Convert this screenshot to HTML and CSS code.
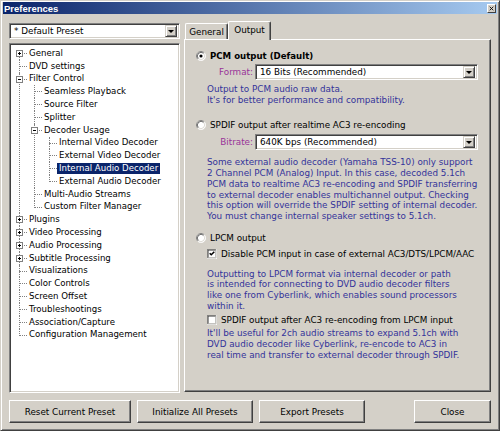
FILE: index.html
```html
<!DOCTYPE html>
<html>
<head>
<meta charset="utf-8">
<title>Preferences</title>
<link rel="stylesheet" href="styles.css">
</head>
<body>
<div class="window">
  <div class="titlebar">
    <span class="title">Preferences</span>
    <span class="xbtn"><svg width="7" height="7" viewBox="0 0 7 7"><path d="M1 1L6 6M6 1L1 6" stroke="#000" stroke-width="1.2"/></svg></span>
  </div>
  <div class="main">
    <div class="left">
      <div class="combo">
        <span class="val">* Default Preset</span>
        <span class="drop"><span class="tri"></span></span>
      </div>
      <div class="tree">
        <ul class="root">
          <li class="has"><span class="exp plus"></span><div class="row"><span class="lbl">General</span></div></li>
          <li><div class="row"><span class="lbl">DVD settings</span></div></li>
          <li class="has"><span class="exp minus"></span><div class="row"><span class="lbl">Filter Control</span></div>
            <ul>
              <li><div class="row"><span class="lbl">Seamless Playback</span></div></li>
              <li><div class="row"><span class="lbl">Source Filter</span></div></li>
              <li><div class="row"><span class="lbl">Splitter</span></div></li>
              <li class="has"><span class="exp minus"></span><div class="row"><span class="lbl">Decoder Usage</span></div>
                <ul>
                  <li><div class="row"><span class="lbl">Internal Video Decoder</span></div></li>
                  <li><div class="row"><span class="lbl">External Video Decoder</span></div></li>
                  <li><div class="row"><span class="lbl sel">Internal Audio Decoder</span></div></li>
                  <li><div class="row"><span class="lbl">External Audio Decoder</span></div></li>
                </ul>
              </li>
              <li><div class="row"><span class="lbl">Multi-Audio Streams</span></div></li>
              <li><div class="row"><span class="lbl">Custom Filter Manager</span></div></li>
            </ul>
          </li>
          <li class="has"><span class="exp plus"></span><div class="row"><span class="lbl">Plugins</span></div></li>
          <li class="has"><span class="exp plus"></span><div class="row"><span class="lbl">Video Processing</span></div></li>
          <li class="has"><span class="exp plus"></span><div class="row"><span class="lbl">Audio Processing</span></div></li>
          <li class="has"><span class="exp plus"></span><div class="row"><span class="lbl">Subtitle Processing</span></div></li>
          <li><div class="row"><span class="lbl">Visualizations</span></div></li>
          <li><div class="row"><span class="lbl">Color Controls</span></div></li>
          <li><div class="row"><span class="lbl">Screen Offset</span></div></li>
          <li><div class="row"><span class="lbl">Troubleshootings</span></div></li>
          <li><div class="row"><span class="lbl">Association/Capture</span></div></li>
          <li><div class="row"><span class="lbl">Configuration Management</span></div></li>
        </ul>
      </div>
    </div>
    <div class="right">
      <div class="tabs">
        <div class="tab">General</div>
        <div class="tab active">Output</div>
      </div>
      <div class="panel">
        <div class="opt first">
          <svg class="radio" width="10" height="10" viewBox="0 0 12 12"><circle cx="6" cy="6" r="5.5" fill="#fff"/><path d="M9.89 2.11A5.5 5.5 0 0 0 2.11 9.89" stroke="#808080" fill="none"/><path d="M2.11 9.89A5.5 5.5 0 0 0 9.89 2.11" stroke="#fff" fill="none"/><path d="M9.18 2.82A4.5 4.5 0 0 0 2.82 9.18" stroke="#404040" fill="none"/><path d="M2.82 9.18A4.5 4.5 0 0 0 9.18 2.82" stroke="#d4d0c8" fill="none"/><circle cx="6" cy="6" r="1.9" fill="#000"/></svg>
          <span class="bold">PCM output (Default)</span>
        </div>
        <div class="field f1">
          <span class="flabel">Format:</span>
          <div class="combo wide"><span class="val">16 Bits (Recommended)</span><span class="drop"><span class="tri"></span></span></div>
        </div>
        <p class="note n1">Output to PCM audio raw data.<br>It's for better performance and compatibility.</p>

        <div class="opt second">
          <svg class="radio" width="10" height="10" viewBox="0 0 12 12"><circle cx="6" cy="6" r="5.5" fill="#fff"/><path d="M9.89 2.11A5.5 5.5 0 0 0 2.11 9.89" stroke="#808080" fill="none"/><path d="M2.11 9.89A5.5 5.5 0 0 0 9.89 2.11" stroke="#fff" fill="none"/><path d="M9.18 2.82A4.5 4.5 0 0 0 2.82 9.18" stroke="#404040" fill="none"/><path d="M2.82 9.18A4.5 4.5 0 0 0 9.18 2.82" stroke="#d4d0c8" fill="none"/></svg>
          <span>SPDIF output after realtime AC3 re-encoding</span>
        </div>
        <div class="field f2">
          <span class="flabel">Bitrate:</span>
          <div class="combo wide"><span class="val">640K bps (Recommended)</span><span class="drop"><span class="tri"></span></span></div>
        </div>
        <p class="note n2">Some external audio decoder (Yamaha TSS-10) only support<br>2 Channel PCM (Analog) Input. In this case, decoded 5.1ch<br>PCM data to realtime AC3 re-encoding and SPDIF transferring<br>to external decoder enables multichannel output. Checking<br>this option will override the SPDIF setting of internal decoder.<br>You must change internal speaker settings to 5.1ch.</p>

        <div class="opt third">
          <svg class="radio" width="10" height="10" viewBox="0 0 12 12"><circle cx="6" cy="6" r="5.5" fill="#fff"/><path d="M9.89 2.11A5.5 5.5 0 0 0 2.11 9.89" stroke="#808080" fill="none"/><path d="M2.11 9.89A5.5 5.5 0 0 0 9.89 2.11" stroke="#fff" fill="none"/><path d="M9.18 2.82A4.5 4.5 0 0 0 2.82 9.18" stroke="#404040" fill="none"/><path d="M2.82 9.18A4.5 4.5 0 0 0 9.18 2.82" stroke="#d4d0c8" fill="none"/></svg>
          <span>LPCM output</span>
        </div>
        <div class="chk c1">
          <svg class="cbox" width="10" height="10" viewBox="0 0 13 13"><rect width="13" height="13" fill="#fff"/><rect width="12" height="12" fill="#808080"/><rect x="1" y="1" width="11" height="11" fill="#d4d0c8"/><rect x="1" y="1" width="10" height="10" fill="#404040"/><rect x="2" y="2" width="9" height="9" fill="#fff"/><path d="M3.5 5.5L5.5 7.5L9.5 3.5" stroke="#000" stroke-width="2" fill="none"/></svg>
          <span>Disable PCM input in case of external AC3/DTS/LPCM/AAC</span>
        </div>
        <p class="note n3">Outputting to LPCM format via internal decoder or path<br>is intended for connecting to DVD audio decoder filters<br>like one from Cyberlink, which enables sound processors<br>within it.</p>
        <div class="chk c2">
          <svg class="cbox" width="10" height="10" viewBox="0 0 13 13"><rect width="13" height="13" fill="#fff"/><rect width="12" height="12" fill="#808080"/><rect x="1" y="1" width="11" height="11" fill="#d4d0c8"/><rect x="1" y="1" width="10" height="10" fill="#404040"/><rect x="2" y="2" width="9" height="9" fill="#fff"/></svg>
          <span>SPDIF output after AC3 re-encoding from LPCM input</span>
        </div>
        <p class="note n4">It'll be useful for 2ch audio streams to expand 5.1ch with<br>DVD audio decoder like Cyberlink, re-encode to AC3 in<br>real time and transfer to external decoder through SPDIF.</p>
      </div>
    </div>
  </div>
  <div class="buttons">
    <button class="btn b1">Reset Current Preset</button>
    <button class="btn b2">Initialize All Presets</button>
    <button class="btn b3">Export Presets</button>
    <button class="btn b4">Close</button>
  </div>
</div>
</body>
</html>
```
FILE: styles.css
```css
* { box-sizing: border-box; }
html, body { margin: 0; padding: 0; background: #d4d0c8; }
body {
  font-family: "DejaVu Sans", Verdana, sans-serif;
  font-size: 8.8px;
  color: #000;
}
.window {
  width: 500px;
  height: 431px;
  background: #d4d0c8;
  border: 1px solid;
  border-color: #d4d0c8 #404040 #404040 #d4d0c8;
  box-shadow: inset 1px 1px #fff, inset -1px -1px #808080;
  padding: 1px 2px 2px 2px;
  display: flex;
  flex-direction: column;
}
.titlebar {
  height: 12px;
  background: linear-gradient(to right, #0a246a, #a6caf0);
  display: flex;
  align-items: center;
  justify-content: space-between;
  padding: 0 1px 0 1px;
}
.title {
  font-family: "Liberation Sans", Arial, sans-serif;
  font-weight: bold;
  font-size: 9.5px;
  color: #fff;
}
.xbtn {
  width: 9px;
  height: 9px;
  background: #d4d0c8;
  border: 1px solid;
  border-color: #fff #404040 #404040 #fff;
  display: flex;
  align-items: center;
  justify-content: center;
}
.xbtn svg { display: block; width: 5px; height: 5px; }
.main {
  margin-top: 7px;
  height: 372px;
  padding: 0 6px;
  display: flex;
  gap: 4px;
}
.left {
  width: 171px;
  padding-top: 2px;
  display: flex;
  flex-direction: column;
}
.combo {
  height: 16px;
  background: #fff;
  border: 1px solid;
  border-color: #808080 #fff #fff #808080;
  box-shadow: inset 1px 1px #404040, inset -1px -1px #d4d0c8;
  display: flex;
  align-items: center;
  padding: 2px 2px 2px 4px;
}
.combo .val { flex: 1; white-space: nowrap; }
.drop {
  width: 12px;
  height: 12px;
  background: #d4d0c8;
  border: 1px solid;
  border-color: #d4d0c8 #404040 #404040 #d4d0c8;
  box-shadow: inset 1px 1px #fff, inset -1px -1px #808080;
  display: flex;
  align-items: center;
  justify-content: center;
}
.tri {
  width: 0;
  height: 0;
  border-left: 3px solid transparent;
  border-right: 3px solid transparent;
  border-top: 3px solid #000;
}
.tree {
  margin-top: 4px;
  flex: 1;
  background: #fff;
  border: 1px solid;
  border-color: #808080 #fff #fff #808080;
  box-shadow: inset 1px 1px #404040, inset -1px -1px #d4d0c8;
  padding: 3px 1px 1px 1px;
  overflow: hidden;
  font-size: 8.6px;
}
.tree ul { list-style: none; margin: 0 0 0 -1px; padding: 0; }
.tree ul.root { margin-left: 0; }
.tree li { position: relative; padding-left: 16px; }
.tree li::before {
  content: "";
  position: absolute;
  left: 8px;
  top: 6px;
  width: 8px;
  border-top: 1px dotted #808080;
}
.tree li::after {
  content: "";
  position: absolute;
  left: 8px;
  top: 0;
  bottom: 0;
  border-left: 1px dotted #808080;
}
.tree li:last-child::after { bottom: auto; height: 7px; }
.tree ul.root > li:first-child::after { top: 6px; }
.row {
  height: 12.8px;
  display: flex;
  align-items: center;
}
.lbl {
  line-height: 11px;
  padding: 0 2px;
  white-space: nowrap;
}
.lbl.sel { background: #0a246a; color: #fff; }
.exp {
  position: absolute;
  z-index: 1;
  left: 5px;
  top: 3px;
  width: 7px;
  height: 7px;
  background: #fff;
  border: 1px solid #808080;
}
.exp::before {
  content: "";
  position: absolute;
  left: 1px;
  top: 2px;
  width: 3px;
  height: 1px;
  background: #000;
}
.exp.plus::after {
  content: "";
  position: absolute;
  left: 2px;
  top: 1px;
  width: 1px;
  height: 3px;
  background: #000;
}
.right {
  flex: 1;
  display: flex;
  flex-direction: column;
}
.tabs {
  height: 18px;
  display: flex;
  align-items: flex-end;
  padding-left: 1px;
}
.tab {
  width: 43px;
  height: 16px;
  border: 1px solid;
  border-bottom: none;
  border-color: #fff #404040 #404040 #fff;
  box-shadow: inset -1px 0 #808080;
  border-radius: 2px 2px 0 0;
  display: flex;
  align-items: center;
  justify-content: center;
  padding-top: 1px;
}
.tab.active {
  height: 19px;
  margin-bottom: -1px;
  background: #d4d0c8;
  position: relative;
  z-index: 1;
  padding-top: 0;
  padding-bottom: 3px;
}
.panel {
  flex: 1;
  margin-bottom: 1px;
  border: 1px solid;
  border-color: #fff #404040 #404040 #fff;
  box-shadow: inset -1px -1px #808080;
  padding: 10px 12px 0 11px;
}
.opt, .chk {
  display: flex;
  align-items: center;
  height: 11px;
  white-space: nowrap;
}
.radio { margin-right: 4px; flex: none; }
.bold { font-weight: bold; font-size: 8.6px; }
.field {
  display: flex;
  align-items: center;
}
.f1 { margin-top: 3px; }
.f2 { margin-top: 4px; }
.flabel {
  width: 59px;
  text-align: right;
  padding-right: 2px;
  color: #993399;
}
.combo.wide { flex: 1; }
.note {
  margin: 0;
  margin-left: 11px;
  color: #33339a;
  line-height: 10.7px;
  white-space: nowrap;
}
.n1 { margin-top: 4px; }
.opt.second { margin-top: 14px; }
.n2 { margin-top: 7px; }
.opt.third { margin-top: 11px; }
.chk { margin-left: 11px; }
.chk.c1 { margin-top: 5px; }
.cbox { margin-right: 4px; flex: none; }
.n3 { margin-top: 9px; }
.chk.c2 { margin-top: 3px; }
.n4 { margin-top: 3px; }
.buttons {
  margin-top: 7px;
  height: 23px;
  padding: 0 6px;
  display: flex;
  gap: 6px;
}
.btn {
  font-family: "DejaVu Sans", Verdana, sans-serif;
  font-size: 8.8px;
  color: #000;
  height: 23px;
  background: #d4d0c8;
  border: 1px solid;
  border-color: #fff #404040 #404040 #fff;
  box-shadow: inset -1px -1px #808080;
  padding: 0;
  white-space: nowrap;
}
.b1 { width: 122px; }
.b2 { width: 116px; }
.b3 { width: 106px; }
.b4 { width: 77px; margin-left: auto; }
```
